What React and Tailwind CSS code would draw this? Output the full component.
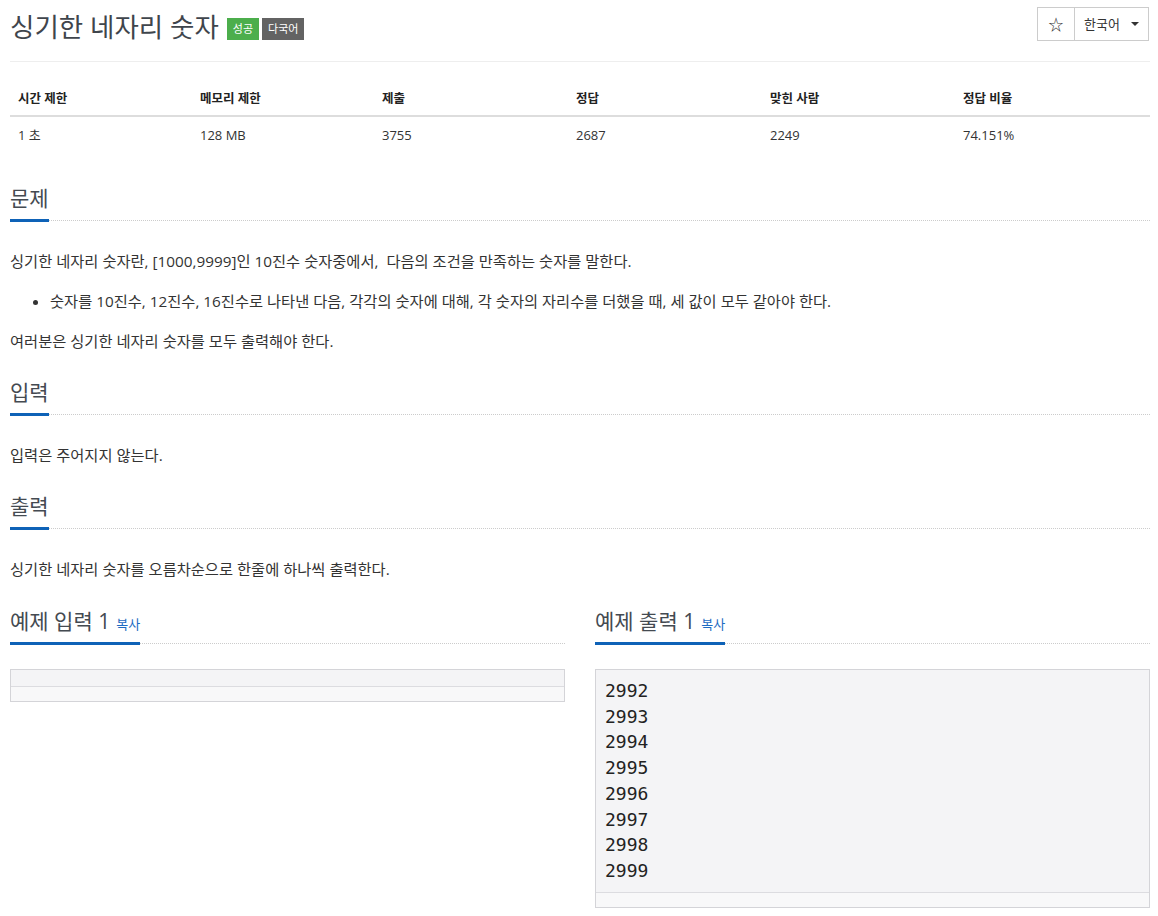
import React from 'react';

const FONT = { fontFamily: '"Open Sans", "Noto Sans CJK KR", sans-serif' };

const STATS = [
  { label: '시간 제한', value: '1 초' },
  { label: '메모리 제한', value: '128 MB' },
  { label: '제출', value: '3755' },
  { label: '정답', value: '2687' },
  { label: '맞힌 사람', value: '2249' },
  { label: '정답 비율', value: '74.151%' },
];

const OUTPUT = ['2992', '2993', '2994', '2995', '2996', '2997', '2998', '2999'];

function Headline({ children, copy }) {
  return (
    <div className={`border-b border-dotted border-[#ccc] ${copy ? 'mb-[25px]' : 'mb-[30px]'}`}>
      <h2 className="inline-block border-b-[3px] border-[#0e62b7] -mb-[2px] pb-[7px] text-[21px] leading-[28px] text-[#444a51]">
        {children}
        {copy && <span className="ml-[6px] text-[13px] leading-none text-[#1d6bc2]">복사</span>}
      </h2>
    </div>
  );
}

function Sample({ lines }) {
  return (
    <div className="border border-[#d4d4d8] bg-[#f4f4f6]">
      <pre
        className="px-[9px] py-2 text-[18px] leading-[25.7px] text-[#222] min-h-[16px]"
        style={{ fontFamily: '"DejaVu Sans Mono", monospace' }}
      >
        {lines.join('\n')}
      </pre>
      <div className="h-[15px] border-t border-[#dcdce0] bg-[#f8f8f9]" />
    </div>
  );
}

export default function App() {
  return (
    <div className="bg-white min-h-[916px] pl-[10px] text-[#333] text-[15.3px] leading-[21px]" style={FONT}>
      <div className="w-[1140px]">
        {/* header */}
        <div className="flex items-start justify-between pt-[7px]">
          <div className="flex items-center pt-[3px]">
            <h1 className="text-[26.5px] leading-[34px] text-[#3f454c]">싱기한 네자리 숫자</h1>
            <span className="mt-[3px] ml-[8px] bg-[#4cae4c] text-white text-[11px] leading-[22px] px-[6px]">성공</span>
            <span className="mt-[3px] ml-[3px] bg-[#636363] text-white text-[11px] leading-[22px] px-[6px]">다국어</span>
          </div>
          <div className="flex mr-[1px]">
            <button className="w-[38px] h-[34px] border border-[#ccc] text-[15px] text-[#333]">☆</button>
            <button className="w-[74px] h-[34px] border border-l-0 border-[#ccc] pl-[9px] text-[13px] flex items-center gap-[11px]">
              한국어
              <span className="w-0 h-0 border-x-[4px] border-x-transparent border-t-[4px] border-t-[#333]" />
            </button>
          </div>
        </div>
        <div className="border-b border-[#eee] mt-[17px] mb-[20px]" />

        {/* stats table */}
        <div className="grid grid-cols-[182px_182px_194px_194px_193px_1fr] text-[13px] leading-[20px]">
          {STATS.map((s) => (
            <div key={s.label} className="px-2 pt-[7px] pb-[6px] font-bold text-[12.5px] text-[#222] border-b-2 border-[#ddd]">{s.label}</div>
          ))}
          {STATS.map((s) => (
            <div key={s.label} className="px-2 pt-[8px] pb-[8px] text-[#333]">{s.value}</div>
          ))}
        </div>

        {/* 문제 */}
        <section className="mt-[31px]">
          <Headline>문제</Headline>
          <p className="mb-[19px]">싱기한 네자리 숫자란, [1000,9999]인 10진수 숫자중에서,&nbsp; 다음의 조건을 만족하는 숫자를 말한다.</p>
          <ul className="list-disc pl-[40px] mb-[19px]">
            <li>숫자를 10진수, 12진수, 16진수로 나타낸 다음, 각각의 숫자에 대해, 각 숫자의 자리수를 더했을 때, 세 값이 모두 같아야 한다.</li>
          </ul>
          <p>여러분은 싱기한 네자리 숫자를 모두 출력해야 한다.</p>
        </section>

        {/* 입력 */}
        <section className="mt-[26px]">
          <Headline>입력</Headline>
          <p>입력은 주어지지 않는다.</p>
        </section>

        {/* 출력 */}
        <section className="mt-[26px]">
          <Headline>출력</Headline>
          <p>싱기한 네자리 숫자를 오름차순으로 한줄에 하나씩 출력한다.</p>
        </section>

        {/* 예제 */}
        <div className="grid grid-cols-2 gap-[30px] mt-[27px]">
          <section>
            <Headline copy>예제 입력 1</Headline>
            <Sample lines={[]} />
          </section>
          <section>
            <Headline copy>예제 출력 1</Headline>
            <Sample lines={OUTPUT} />
          </section>
        </div>
      </div>
    </div>
  );
}
